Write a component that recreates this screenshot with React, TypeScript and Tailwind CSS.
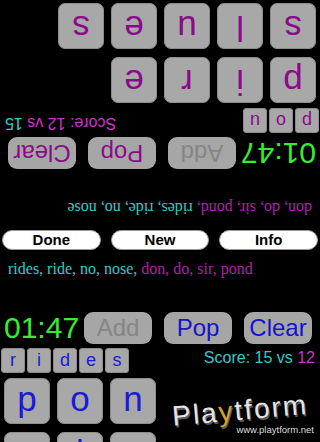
import type { ReactNode } from "react"

type Word = { text: string; cls: string }

type PanelProps = {
  words: Word[]
  btnGap: string
  letterCls: string
  btnCls: string
  small: string[]
  rows: string[][]
  score: ReactNode
}

function Panel({ words, btnGap, letterCls, btnCls, small, rows, score }: PanelProps) {
  return (
    <div className="flex flex-col">
      {/* played words */}
      <div className="pl-[8px] pt-[3px] whitespace-nowrap text-[16px] leading-[20px] [font-family:'Liberation_Serif','Times_New_Roman',serif]">
        {words.map((w, i) => (
          <span key={i} className={w.cls}>
            {w.text}
          </span>
        ))}
      </div>

      {/* timer + buttons */}
      <div className={`flex items-center pl-[4px] ${btnGap}`}>
        <div className="w-[80px] h-[32px] text-[30px] leading-[32px] text-[#33ee33]">01:47</div>
        <div className="flex gap-[12px]">
          <div className="w-[68px] h-[32px] rounded-[9px] bg-[#a6a6a6] flex items-center justify-center text-[24px] text-[#858585]">
            Add
          </div>
          <div className={`w-[68px] h-[32px] rounded-[9px] bg-[#a6a6a6] flex items-center justify-center text-[24px] ${btnCls}`}>
            Pop
          </div>
          <div className={`w-[68px] h-[32px] rounded-[9px] bg-[#a6a6a6] flex items-center justify-center text-[24px] ${btnCls}`}>
            Clear
          </div>
        </div>
      </div>

      {/* current word + score */}
      <div className="mt-[4px] flex items-start justify-between pl-[1px] pr-[5px]">
        <div className="flex gap-[2px]">
          {small.map((l, i) => (
            <div
              key={i}
              className={`w-[24px] h-[25px] rounded-[3px] bg-[#a8a8a8] border border-[#8c8c8c] flex items-center justify-center text-[18px] ${letterCls}`}
            >
              {l}
            </div>
          ))}
        </div>
        <div className="mt-[2px] text-[16px] leading-[16px]">{score}</div>
      </div>

      {/* letter tiles */}
      <div className="mt-[5px] flex flex-col gap-[8px] pl-[4px]">
        {rows.map((row, r) => (
          <div key={r} className="flex gap-[7px]">
            {row.map((l, i) => (
              <div
                key={i}
                className={`w-[46px] h-[46px] rounded-[7px] bg-[#a8a8a8] border border-[#8c8c8c] flex items-center justify-center pb-[4px] text-[35px] ${letterCls}`}
              >
                {l}
              </div>
            ))}
          </div>
        ))}
      </div>
    </div>
  )
}

const teal = "text-[#33cccc]"
const magenta = "text-[#b01fb0]"

export default function App() {
  return (
    <div className="relative w-[320px] h-[442px] overflow-hidden bg-black [font-family:'Liberation_Sans',Arial,sans-serif]">
      {/* opponent side, upside down */}
      <div className="h-[221px] overflow-hidden rotate-180">
        <Panel
          words={[
            { text: "don, do, sir, pond, ", cls: magenta },
            { text: "rides, ride, no, nose", cls: teal },
          ]}
          btnGap="mt-[29px]"
          letterCls="text-[#8a0a8a]"
          btnCls="text-[#8a0a8a]"
          small={["p", "o", "u"]}
          rows={[
            ["p", "i", "r", "e"],
            ["s", "l", "u", "e", "s"],
          ]}
          score={
            <>
              <span className="text-[#cc33cc]">Score: 12 vs </span>
              <span className={teal}>15</span>
            </>
          }
        />
      </div>

      {/* shared controls */}
      <div className="h-[35px] pt-[9px] px-[2px] flex gap-[10px]">
        {["Done", "New", "Info"].map((t) => (
          <div
            key={t}
            className="flex-1 h-[20px] rounded-full bg-white border border-[#9a9a9a] flex items-center justify-center text-[15px] font-bold text-black"
          >
            {t}
          </div>
        ))}
      </div>

      {/* player side */}
      <Panel
        words={[
          { text: "rides, ride, no, nose, ", cls: teal },
          { text: "don, do, sir, pond", cls: magenta },
        ]}
        btnGap="mt-[33px]"
        letterCls="text-[#1a1ad8]"
        btnCls="text-[#1414cc]"
        small={["r", "i", "d", "e", "s"]}
        rows={[
          ["p", "o", "n"],
          ["a", "l", "e"],
        ]}
        score={
          <>
            <span className={teal}>Score: 15 vs </span>
            <span className="text-[#cc33cc]">12</span>
          </>
        }
      />

      {/* watermark */}
      <div className="absolute left-[168px] top-[396px] w-[148px] flex flex-col items-end">
        <div className="-rotate-[5deg] self-start pl-[4px] text-[28px] leading-[30px] tracking-[2px] text-[#e4e4e4] [text-shadow:1px_2px_0_#5a5a5a]">
          Pla<span className="text-[#d6a21c]">y</span>tform
        </div>
        <div className="-mt-[2px] pr-[2px] text-[9.5px] leading-[11px] text-[#dddddd]">www.playtform.net</div>
      </div>
    </div>
  )
}
